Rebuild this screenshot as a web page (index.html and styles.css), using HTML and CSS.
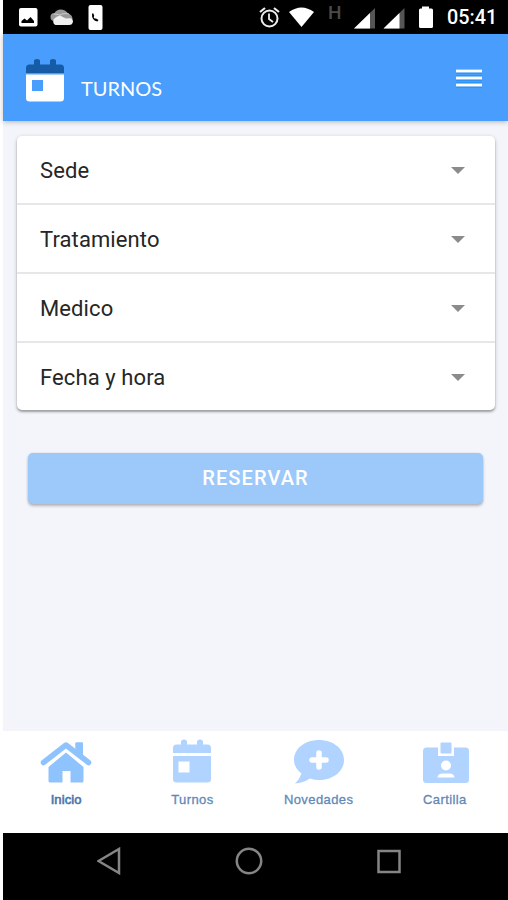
FILE: index.html
```html
<!DOCTYPE html>
<html lang="es">
<head>
<meta charset="utf-8">
<title>Turnos</title>
<link rel="stylesheet" href="styles.css">
</head>
<body>
<div class="app">
  <div class="status">
    <svg class="notice" width="84" height="34" viewBox="19 0 84 34">
      <rect x="19" y="8" width="18.500" height="18.500" rx="2" fill="#fff"/>
      <path d="M21.500 23v-2l3-2.500 2.500 2 3.500-3.500 3.500 4v2z" fill="#000"/>
      <path d="M54.500 21a4 4 0 0 1 0-8q2-3.500 6-3.500 5 0 7.500 4 4 1 4.500 5v3z" fill="#999"/>
      <path d="M54 14q5-1 9 4l9 1M57 18q4-6 12-4" stroke="#ccc" fill="none"/>
      <path d="M55.500 25a4 4 0 0 1-.5-7 7 7 0 0 1 8.500-.5q2 1 3 1.500 6-1.500 6.500 2.500-.5 3.500-4 3.500z" fill="#f0f0f0"/>
      <rect x="88.500" y="5" width="14" height="25" rx="2" fill="#fff"/>
      <path d="M92 13.500q-.5 7 5.500 8l1-1.500-2.500-1.500h-1.500l-.8-1.200.5-1.500-.8-2.300z" fill="#000"/>
    </svg>
    <svg width="56" height="34" viewBox="259 0 56 34">
      <g fill="none" stroke="#eee" stroke-width="2">
        <circle cx="269.500" cy="18.500" r="8"/>
        <path d="M260 12l5-4M279 12l-5-4" stroke-width="2.200"/>
        <path d="M269 13.500v5.500l4 3" stroke-width="1.800"/>
      </g>
      <path d="M289 12q12.500-9 25 0L301.500 27z" fill="#fff"/>
    </svg>
    <span class="network">H</span>
    <svg width="80" height="34" viewBox="353 0 80 34">
      <path d="M354 28.500L375 8v20.500z" fill="#555"/><path d="M354 28.500L370 13v15.500z" fill="#fff"/>
      <path d="M383.500 28.500L404.500 8v20.500z" fill="#555"/><path d="M383.500 28.500L399.500 13v15.500z" fill="#fff"/>
      <path d="M422 8.500V6.500h7v2h2.500q1.500 0 1.500 1.500v16.500q0 1.500-1.500 1.500h-11q-1.500 0-1.500-1.500V10q0-1.500 1.500-1.500z" fill="#fff"/>
    </svg>
    <span class="clock">05:41</span>
  </div>
  <header class="header">
    <svg class="brand" width="38" height="44" viewBox="0 0 38 44">
      <path d="M0 14V9q0-3.500 3.500-3.500H8V2q0-2 3-2t3 2v3.500h10V2q0-2 3-2t3 2v3.500h4.500Q38 5.500 38 9v5z" fill="#155ba5"/>
      <path fill-rule="evenodd" d="M0 15.500h38V39q0 3.500-3.500 3.500h-31Q0 42.500 0 39zM6 21v11h11V21z" fill="#fff"/>
    </svg>
    <h1 class="title">TURNOS</h1>
    <svg class="menu" width="26" height="19" viewBox="0 0 26 19">
      <path d="M0 2h26M0 9h26M0 16h26" stroke="#1688ef" stroke-width="5"/>
      <path d="M0 2h26M0 9h26M0 16h26" stroke="#fff" stroke-width="3"/>
    </svg>
  </header>
  <main class="content">
    <div class="card">
      <div class="row"><span>Sede</span><i class="caret"></i></div>
      <div class="row"><span>Tratamiento</span><i class="caret"></i></div>
      <div class="row"><span>Medico</span><i class="caret"></i></div>
      <div class="row"><span>Fecha y hora</span><i class="caret"></i></div>
    </div>
    <button class="reserve">RESERVAR</button>
  </main>
  <nav class="tabs">
    <div class="tab active">
      <svg width="52" height="46" viewBox="0 0 52 46">
        <path d="M35.500 3.500q0-1 1-1H42q1 0 1 1V19l-7.500-6z" fill="currentColor"/>
        <path d="M8.500 27L26 12.500 43.500 27v14q0 1.500-1.500 1.500H30.500V31h-8v11.500H10q-1.500 0-1.500-1.500z" fill="currentColor"/>
        <path d="M4 23.500L26 6l22 17.500" fill="none" stroke="#fff" stroke-width="8.500"/>
        <path d="M35.500 3.500q0-1 1-1H42q1 0 1 1V17l-7.500-6z" fill="currentColor"/>
        <path d="M3.500 22.500L26 5l22.500 17.500" fill="none" stroke="currentColor" stroke-width="5.500" stroke-linecap="round" stroke-linejoin="round"/>
      </svg>
      <span>Inicio</span>
    </div>
    <div class="tab">
      <svg width="54" height="46" viewBox="0 0 52 46">
        <path d="M7 13V8q0-3.500 3.500-3.500H15V2q0-2.500 3-2.500T21 2v2.500h10V2q0-2.500 3-2.500T37 2v2.500h4.500Q45 4.500 45 8v5z" fill="currentColor"/>
        <path fill-rule="evenodd" d="M7 16h38v23q0 3.500-3.500 3.500h-31Q7 42.500 7 39zM12.500 21.500v11h11v-11z" fill="currentColor"/>
      </svg>
      <span>Turnos</span>
    </div>
    <div class="tab">
      <svg width="52" height="46" viewBox="0 0 52 46">
        <path d="M26 0C40 0 51 8.500 51 20S40 40 26 40q-5 0-9-1.500-7 4.500-15 5 5-5 6.500-10Q1 28 1 20C1 8.500 12 0 26 0z" fill="currentColor"/>
        <path d="M26 13v14M19 20h14" stroke="#fff" stroke-width="5.500" stroke-linecap="round"/>
      </svg>
      <span>Novedades</span>
    </div>
    <div class="tab">
      <svg width="52" height="46" viewBox="0 0 52 46">
        <rect x="4" y="7.500" width="46" height="35.500" rx="3.500" fill="currentColor"/>
        <path d="M19 7h16v9H19z" fill="#fff"/>
        <rect x="21.500" y="2.500" width="11" height="11" rx="1" fill="currentColor"/>
        <circle cx="27" cy="25.500" r="5" fill="#fff"/>
        <path d="M18.500 37.500q.5-4 5-4h7q4.500 0 5 4z" fill="#fff"/>
      </svg>
      <span>Cartilla</span>
    </div>
  </nav>
  <div class="system">
    <svg width="24" height="28" viewBox="0 0 24 28"><path d="M1.500 14L22 2v24z" fill="none" stroke="#858585" stroke-width="2.500"/></svg>
    <svg width="28" height="28" viewBox="0 0 28 28"><circle cx="14" cy="14" r="12.200" fill="none" stroke="#858585" stroke-width="2.500"/></svg>
    <svg width="24" height="28" viewBox="0 0 24 28"><rect x="1.500" y="4" width="21" height="21" fill="none" stroke="#858585" stroke-width="2.500"/></svg>
  </div>
</div>
</body>
</html>
```
FILE: styles.css
```css
* { box-sizing: border-box; }
body {
  margin: 0;
  background: #fff;
  font-family: Roboto, sans-serif;
}
.app {
  display: flex;
  flex-direction: column;
  height: 900px;
  margin-left: 3px;
  background: #f3f5fa;
}
.status {
  display: flex;
  flex: none;
  height: 34px;
  padding-left: 16px;
  background: #000;
}
.status svg { flex: none; }
.notice { margin-right: 156px; }
.network {
  width: 38px;
  padding-left: 13px;
  color: #4b4b4b;
  font-size: 19px;
  font-weight: 500;
  line-height: 26px;
}
.clock {
  margin-left: 14px;
  color: #fff;
  font-size: 19.800px;
  font-weight: 500;
  line-height: 36px;
}
.header {
  display: flex;
  flex: none;
  align-items: flex-start;
  height: 87px;
  padding: 24px 26px 0 23px;
  background: #489dfd;
  box-shadow: 0 1px 5px rgba(60, 40, 40, .3);
}
.brand { margin-top: 1px; }
.title {
  margin: 15px 0 0 17px;
  color: #fff;
  font-family: Lato, sans-serif;
  font-size: 20px;
  font-weight: 400;
  line-height: 30px;
}
.menu { margin: 11px 0 0 auto; }
.content {
  flex: 1;
  padding: 15px 13px 0 14px;
}
.card {
  height: 274px;
  background: #fff;
  border-radius: 5px;
  box-shadow: 0 2px 2px rgba(0, 0, 0, .25), 0 1px 4px rgba(0, 0, 0, .2);
}
.row {
  display: flex;
  align-items: center;
  justify-content: space-between;
  height: 69px;
  padding: 1px 30px 0 23px;
  border-bottom: 2px solid #e6e7e9;
  color: #262626;
  font-size: 22px;
  letter-spacing: .1px;
}
.row:last-child {
  height: 67px;
  border-bottom: 0;
}
.caret {
  border: 7px solid transparent;
  border-top-color: #8b8b8b;
  border-bottom: 0;
}
.reserve {
  display: block;
  width: 455px;
  height: 51px;
  margin: 43px 0 0 11px;
  padding: 0 0 2px;
  border: 0;
  border-radius: 5px;
  background: #9dc9fa;
  box-shadow: 0 2px 3px rgba(0, 0, 0, .25), 0 0 2px rgba(0, 0, 0, .12);
  color: #fff;
  font: 500 20px Roboto, sans-serif;
  letter-spacing: 1.100px;
}
.tabs {
  display: grid;
  flex: none;
  grid-template-columns: repeat(4, 1fr);
  height: 102px;
  background: #fff;
}
.tab {
  display: flex;
  flex-direction: column;
  align-items: center;
  padding-top: 9px;
  color: #b0d4ff;
  font-family: "Liberation Sans", sans-serif;
  font-size: 13px;
  line-height: 16px;
}
.tab svg { overflow: visible; }
.tab span {
  margin-top: 6px;
  color: #6288b8;
  letter-spacing: .4px;
  -webkit-text-stroke: .3px #6288b8;
}
.tab.active { color: #8fc3fe; }
.tab.active span {
  color: #4776b0;
  letter-spacing: .1px;
  -webkit-text-stroke: .6px #4776b0;
}
.system {
  display: flex;
  flex: none;
  height: 67px;
  padding: 14px 0 0 94px;
  gap: 114px;
  background: #000;
}
```
